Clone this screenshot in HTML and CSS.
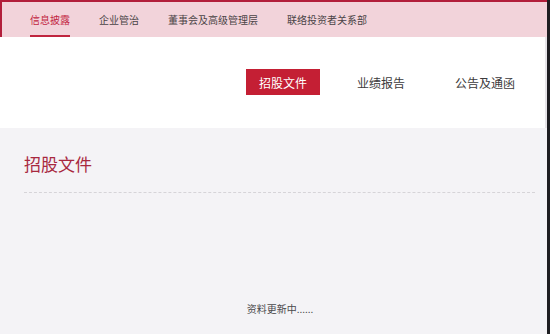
FILE: index.html
```html
<!DOCTYPE html>
<html lang="zh">
<head>
<meta charset="utf-8">
<link rel="stylesheet" href="styles.css">
</head>
<body>
<div class="frame">
  <header class="topnav">
    <a class="nav-item active">信息披露</a>
    <a class="nav-item">企业管治</a>
    <a class="nav-item">董事会及高级管理层</a>
    <a class="nav-item">联络投资者关系部</a>
  </header>
  <section class="tabs">
    <a class="tab active">招股文件</a>
    <a class="tab">业绩报告</a>
    <a class="tab">公告及通函</a>
  </section>
  <main class="content">
    <h1 class="title">招股文件</h1>
    <p class="status">资料更新中......</p>
  </main>
</div>
</body>
</html>
```
FILE: styles.css
```css
* { box-sizing: border-box; }
html, body { margin: 0; padding: 0; }
body {
  width: 550px;
  height: 334px;
  overflow: hidden;
  font-family: "Noto Sans CJK SC", "Noto Sans", sans-serif;
  background: #fff;
}
.frame {
  height: 334px;
  border-right: 3px solid #1e1e22;
  display: flex;
  flex-direction: column;
  box-shadow: inset -2px 0 0 #e6e4e8;
}
.topnav {
  height: 37px;
  background: #f2d3da;
  border-top: 2px solid #b21e3b;
  border-left: 2px solid #b21e3b;
  display: flex;
  align-items: stretch;
  gap: 29px;
  padding-left: 28px;
}
.nav-item {
  font-size: 10px;
  color: #4a4446;
  display: flex;
  align-items: center;
  padding-top: 1px;
  border-bottom: 2px solid transparent;
}
.nav-item.active {
  color: #c2253f;
  border-bottom-color: #c0243e;
}
.tabs {
  height: 91px;
  display: flex;
  justify-content: flex-end;
  align-items: flex-start;
  gap: 24px;
  padding: 32px 19px 0 0;
}
.tab {
  height: 26px;
  padding: 0 13px;
  font-size: 12px;
  color: #3c3a3c;
  display: flex;
  align-items: center;
}
.tab.active {
  background: #c41f34;
  color: #fff;
  width: 74px;
  justify-content: center;
}
.content {
  flex: 1;
  background: #f4f3f6;
  padding: 24px 12px 0 24px;
  display: flex;
  flex-direction: column;
}
.title {
  margin: 0;
  font-size: 17px;
  font-weight: normal;
  color: #a8283f;
  line-height: 24px;
  padding-bottom: 16px;
  border-bottom: 1px dashed #d6d4d8;
}
.status {
  margin: 109px 0 0 0;
  padding-left: 1px;
  text-align: center;
  font-size: 10px;
  color: #4a4a4c;
  line-height: 14px;
}
```
